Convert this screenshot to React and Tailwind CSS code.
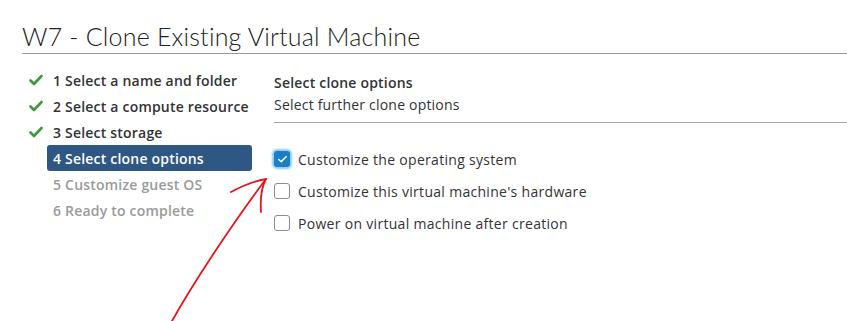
import { Check } from 'lucide-react';

const steps = [
    { n: 1, label: 'Select a name and folder', state: 'done' },
    { n: 2, label: 'Select a compute resource', state: 'done' },
    { n: 3, label: 'Select storage', state: 'done' },
    { n: 4, label: 'Select clone options', state: 'active' },
    { n: 5, label: 'Customize guest OS', state: 'todo' },
    { n: 6, label: 'Ready to complete', state: 'todo' },
];

const options = [
    { label: 'Customize the operating system', checked: true },
    { label: "Customize this virtual machine's hardware", checked: false },
    { label: 'Power on virtual machine after creation', checked: false },
];

function GreenCheck() {
    return (
        <svg width="14" height="12" viewBox="0 0 14 12" className="shrink-0">
            <path d="M1.5 6.5 L5 10 L12.5 2" fill="none" stroke="#3d9a3d" strokeWidth="2.6" strokeLinecap="round" strokeLinejoin="round" />
        </svg>
    );
}

export default function App() {
    return (
        <div className="relative w-[847px] h-[321px] overflow-hidden bg-white text-[#333]" style={{ fontFamily: '"Open Sans", sans-serif' }}>
            <div className="pl-[22px] pt-[20px]">
                <h1 className="text-[25px] font-light leading-[32px] text-[#222] tracking-[0.2px]" style={{ fontFamily: 'Lato, sans-serif' }}>W7 - Clone Existing Virtual Machine</h1>
                <div className="h-px bg-[#9a9a9a] mt-[1px]"></div>
            </div>

            <div className="flex pt-[13px]">
                {/* Steps */}
                <div className="w-[252px] pl-[29px] flex flex-col">
                    {steps.map(s => (
                        <div key={s.n} className="h-[26px] flex items-center">
                            <div className="w-[18px] flex items-center">{s.state === 'done' && <GreenCheck />}</div>
                            <div className={`h-[26px] flex items-center pl-[6px] w-[205px] rounded-[3px] text-[14px] font-semibold tracking-[0.2px] ${s.state === 'active' ? 'bg-[#2e5784] text-white' : s.state === 'done' ? 'text-[#333]' : 'text-[#9a9a9a]'}`}>
                                {s.n} {s.label}
                            </div>
                        </div>
                    ))}
                </div>

                {/* Content */}
                <div className="flex-1 pl-[22px] pt-[6px]">
                    <div className="text-[14px] font-semibold leading-[20px] text-[#333] tracking-[0.2px]">Select clone options</div>
                    <div className="text-[14px] leading-[20px] text-[#333] mt-[2px] tracking-[0.2px]">Select further clone options</div>
                    <div className="h-px bg-[#a8a8a8] mt-[7px]"></div>
                    <div className="flex flex-col mt-[20px]">
                        {options.map(o => (
                            <div key={o.label} className="h-[32px] flex items-center gap-[8px] text-[14px] text-[#333] tracking-[0.3px]">
                                {o.checked ? (
                                    <div className="w-[16px] h-[16px] rounded-[3px] bg-[#1a7ec8] flex items-center justify-center shadow-[0_0_2px_2px_rgba(0,140,220,0.45)]">
                                        <Check className="w-[11px] h-[11px] text-white" strokeWidth={3.5} />
                                    </div>
                                ) : (
                                    <div className="w-[16px] h-[16px] rounded-[3px] border border-[#8c8c8c] bg-white"></div>
                                )}
                                <span>{o.label}</span>
                            </div>
                        ))}
                    </div>
                </div>
            </div>

            {/* red annotation arrow */}
            <svg className="absolute left-0 top-0 pointer-events-none" width="847" height="321" viewBox="0 0 847 321">
                <path d="M172 321 C 195 280, 235 220, 266 179" fill="none" stroke="#e8141a" strokeWidth="1.8" strokeLinecap="round" />
                <path d="M231 192 C 242 186, 254 181, 266 179 C 262 186, 260 196, 261 212" fill="none" stroke="#e8141a" strokeWidth="1.8" strokeLinecap="round" strokeLinejoin="round" />
            </svg>
        </div>
    );
}
